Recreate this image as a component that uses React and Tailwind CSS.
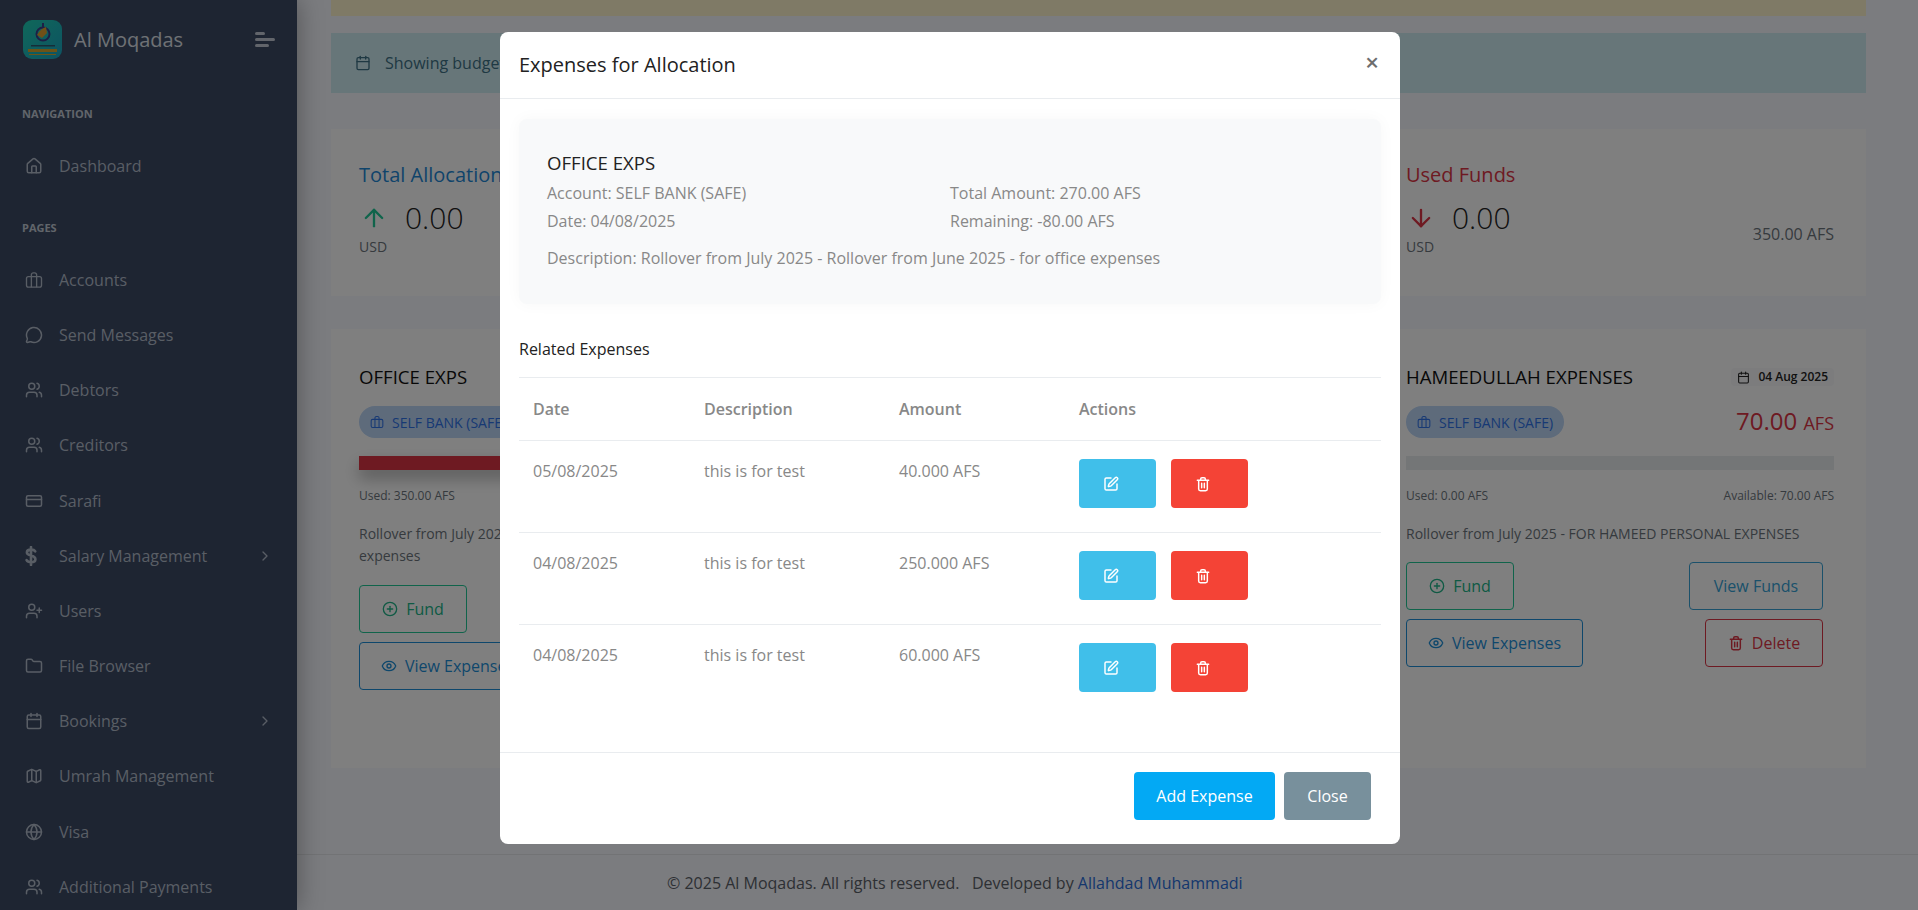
import { House, MessageCircle, Users, CreditCard, ChevronRight, UserPlus, Folder, Calendar, Map, Globe, PlusCircle, Eye, ArrowUp, ArrowDown, SquarePen } from 'lucide-react';

const font = { fontFamily: '"Open Sans", sans-serif' };

function Suitcase({ size = 18, className = '' }) {
  return (
    <svg width={size} height={size} viewBox="0 0 24 24" fill="none" stroke="currentColor" strokeWidth="1.8" strokeLinejoin="round" className={className}>
      <rect x="2" y="7.5" width="20" height="14" rx="2.5" />
      <path d="M8.5 7.5V21.5M15.5 7.5V21.5M8.5 7.5V5a2.5 2.5 0 0 1 2.5-2.5h2A2.5 2.5 0 0 1 15.5 5v2.5" />
    </svg>
  );
}

function TrashAlt({ size = 16, className = '' }) {
  return (
    <svg width={size} height={size} viewBox="0 0 24 24" fill="none" stroke="currentColor" strokeWidth="2.2" strokeLinecap="round" strokeLinejoin="round" className={className}>
      <path d="M3.5 6.5h17M8.5 6.5V4.5a2 2 0 0 1 2-2h3a2 2 0 0 1 2 2v2M5.5 6.5V19.5a2.5 2.5 0 0 0 2.5 2.5h8a2.5 2.5 0 0 0 2.5-2.5V6.5M10 11v6.5M14 11v6.5" />
    </svg>
  );
}

function DollarBold({ className = '' }) {
  return (
    <svg width="12" height="20" viewBox="0 0 12 20" fill="none" stroke="currentColor" strokeWidth="2.6" strokeLinecap="round" className={className}>
      <path d="M6 1v18M10.2 5.4C9.4 4 8 3.6 6 3.6 3.6 3.6 1.9 4.7 1.9 6.5 1.9 10.6 10.4 8.6 10.4 13.2 10.4 15.2 8.5 16.3 6 16.3 3.9 16.3 2.4 15.7 1.6 14.2" />
    </svg>
  );
}

function Logo() {
  return (
    <svg width="39" height="39" viewBox="0 0 39 39" className="rounded-[9px] shrink-0">
      <defs>
        <linearGradient id="logoBg" x1="0" y1="0" x2="1" y2="1">
          <stop offset="0" stopColor="#1fd0b4" />
          <stop offset="1" stopColor="#1ca6c4" />
        </linearGradient>
      </defs>
      <rect width="39" height="39" fill="url(#logoBg)" />
      <circle cx="20" cy="14" r="6.5" fill="none" stroke="#3a3f8c" strokeWidth="2" />
      <path d="M14 15c3-5 6-7 9-8l1 6-5 5z" fill="#e0a030" />
      <path d="M19 3h2v5h-2z" fill="#3a3f8c" />
      <path d="M8 25h24v1.5H8z" fill="#2c5a70" />
      <path d="M5 29h29v3H5z" fill="#d9a62e" />
      <path d="M6 34h27v1H6z" fill="#d9a62e" />
    </svg>
  );
}

const NAV_ITEMS = [
  { label: 'Accounts', icon: <Suitcase size={18} /> },
  { label: 'Send Messages', icon: <MessageCircle size={18} /> },
  { label: 'Debtors', icon: <Users size={18} /> },
  { label: 'Creditors', icon: <Users size={18} /> },
  { label: 'Sarafi', icon: <CreditCard size={18} /> },
  { label: 'Salary Management', icon: <DollarBold />, arrow: true },
  { label: 'Users', icon: <UserPlus size={18} /> },
  { label: 'File Browser', icon: <Folder size={18} /> },
  { label: 'Bookings', icon: <Calendar size={18} />, arrow: true },
  { label: 'Umrah Management', icon: <Map size={18} /> },
  { label: 'Visa', icon: <Globe size={18} /> },
  { label: 'Additional Payments', icon: <Users size={18} /> },
];

const EXPENSES = [
  { date: '05/08/2025', description: 'this is for test', amount: '40.000 AFS' },
  { date: '04/08/2025', description: 'this is for test', amount: '250.000 AFS' },
  { date: '04/08/2025', description: 'this is for test', amount: '60.000 AFS' },
];

function NavRow({ item }) {
  return (
    <div className="h-[55.2px] flex items-center pl-[25px] pr-[24px] text-[16px] text-[#b3bccb]">
      <span className="w-[34px] shrink-0 flex items-center">{item.icon}</span>
      <span className="flex-1">{item.label}</span>
      {item.arrow && <ChevronRight size={16} />}
    </div>
  );
}

function Sidebar() {
  return (
    <aside className="relative z-10 w-[297px] shrink-0 h-full bg-[#3c4a64] shadow-[0_0_24px_rgba(0,0,0,0.35)] overflow-hidden">
      <div className="h-[79px] flex items-center pl-[23px] pr-[22px]">
        <Logo />
        <span className="ml-[12px] flex-1 text-[20px] text-[#dfe3ea]">Al Moqadas</span>
        <div className="flex flex-col gap-[3px]">
          <div className="w-[10px] h-[3px] rounded-full bg-[#c5cbd6]" />
          <div className="w-[20px] h-[3px] rounded-full bg-[#c5cbd6]" />
          <div className="w-[14px] h-[3px] rounded-full bg-[#c5cbd6]" />
        </div>
      </div>
      <div className="pl-[22px] mt-[27px] text-[11px] leading-[16px] font-bold text-[#c3cad6]">NAVIGATION</div>
      <div className="mt-[16px]">
        <NavRow item={{ label: 'Dashboard', icon: <House size={18} /> }} />
      </div>
      <div className="pl-[22px] mt-[27px] text-[11px] leading-[16px] font-bold text-[#c3cad6]">PAGES</div>
      <div className="mt-[16px]">
        {NAV_ITEMS.map((item) => (
          <NavRow key={item.label} item={item} />
        ))}
      </div>
    </aside>
  );
}

function OutlineButton({ className, children }) {
  return (
    <button className={`h-[48px] flex items-center justify-center gap-[8px] rounded-[4px] border text-[16px] ${className}`}>
      {children}
    </button>
  );
}

function BudgetCard({ title, date, amount, used, available, description, width, narrow }) {
  return (
    <div className="w-[428px]">
      <div className="flex items-start justify-between h-[30px] mt-[33px]">
        <div className="text-[18.6px] leading-[30px] text-[#111]">{title}</div>
        <div className="mt-[6px] h-[18px] px-[6px] flex items-center gap-[8px] rounded bg-[#f8f9fa] text-[12px] font-semibold text-[#222]">
          <Calendar size={13} />
          {date}
        </div>
      </div>
      <div className="flex items-center justify-between mt-[14px] h-[32px]">
        <div className="h-[32px] px-[11px] flex items-center gap-[8px] rounded-full bg-[#bcd6f7] text-[14px] text-[#2f73e8]">
          <Suitcase size={14} />
          SELF BANK (SAFE)
        </div>
        <div className="text-[#dc3545] text-[24px] leading-[32px]">
          {amount} <span className="text-[18px]">AFS</span>
        </div>
      </div>
      <div className="mt-[18px] h-[14px] bg-[#e9ecef]">
        <div className="h-full bg-[#dc3545] shadow-[0_8px_16px_rgba(0,0,0,0.3)]" style={{ width }} />
      </div>
      <div className="flex justify-between mt-[18px] text-[12px] leading-[16px] text-[#6c757d]">
        <span>Used: {used} AFS</span>
        <span>Available: {available} AFS</span>
      </div>
      <p className="mt-[19px] text-[14px] leading-[22.4px] text-[#6c757d]">{description}</p>
      <div className={`flex justify-between pr-[11px] ${narrow ? 'mt-[17px]' : 'mt-[17px]'}`}>
        <OutlineButton className="w-[108px] border-[#20c997] text-[#20b489]">
          <PlusCircle size={16} /> Fund
        </OutlineButton>
        <OutlineButton className="w-[134px] border-[#36a2d6] text-[#36a2d6]">View Funds</OutlineButton>
      </div>
      <div className="flex justify-between pr-[11px] mt-[9px]">
        <OutlineButton className="w-[177px] border-[#1d8fd8] text-[#1d8fd8]">
          <Eye size={16} /> View Expenses
        </OutlineButton>
        <OutlineButton className="w-[118px] border-[#dc3545] text-[#dc3545]">
          <TrashAlt size={16} /> Delete
        </OutlineButton>
      </div>
    </div>
  );
}

function StatColumn({ title, titleColor, icon }) {
  return (
    <div>
      <div className={`text-[20px] leading-[30px] ${titleColor}`}>{title}</div>
      <div className="flex items-center mt-[8px] h-[40px]">
        <span className="w-[46px] flex justify-center pr-[17px]">{icon}</span>
        <span className="text-[30px] leading-[40px] font-light text-[#222]">0.00</span>
      </div>
      <div className="text-[14px] leading-[18px] text-[#6c757d]">USD</div>
    </div>
  );
}

function Content() {
  return (
    <main className="flex-1 min-w-0 h-full bg-[#f6f8fe] flex flex-col">
      <div className="flex-1 pl-[34px] pr-[52px]">
        <div className="h-[16px] bg-[#fff4cc]" />
        <div className="mt-[17px] h-[60px] bg-[#ceecf3] flex items-center pl-[24px] text-[16px] text-[#3f7286]">
          <Calendar size={16} className="mr-[14px]" />
          Showing budget allocations for August 2025
        </div>
        <div className="mt-[36px] h-[167px] bg-white flex justify-between pl-[28px] pr-[32px] pt-[31px]">
          <StatColumn title="Total Allocations" titleColor="text-[#1e88d6]" icon={<ArrowUp size={28} strokeWidth={2} className="text-[#20c997]" />} />
          <div className="w-[428px] flex justify-between">
            <StatColumn title="Used Funds" titleColor="text-[#dc3545]" icon={<ArrowDown size={28} strokeWidth={2} className="text-[#dc3545]" />} />
            <div className="text-[16px] text-[#6c757d] self-start mt-[62px]">350.00 AFS</div>
          </div>
        </div>
        <div className="mt-[33px] h-[439px] bg-white flex justify-between pl-[28px] pr-[32px]">
          <BudgetCard
            title="OFFICE EXPS"
            date="04 Aug 2025"
            amount="270.00"
            used="350.00"
            available="-80.00"
            width="100%"
            description="Rollover from July 2025 - Rollover from June 2025 - for office expenses"
          />
          <BudgetCard
            title="HAMEEDULLAH EXPENSES"
            date="04 Aug 2025"
            amount="70.00"
            used="0.00"
            available="70.00"
            width="0%"
            narrow
            description="Rollover from July 2025 - FOR HAMEED PERSONAL EXPENSES"
          />
        </div>
      </div>
      <footer className="h-[56px] border-t border-[#e4e6ea] pl-[370px] flex items-center text-[16px] text-[#5b6068] shrink-0">
        <span>© 2025 Al Moqadas. All rights reserved.&nbsp;&nbsp; Developed by <span className="text-[#2a6fdb]">Allahdad Muhammadi</span></span>
      </footer>
    </main>
  );
}

function ExpenseRow({ expense, last }) {
  return (
    <tr className={last ? '' : 'border-b border-[#e9ecef]'}>
      <td className="pl-[14px] pt-[18px] align-top text-[16px] leading-[24px] text-[#888]">{expense.date}</td>
      <td className="pl-[14px] pt-[18px] align-top text-[16px] leading-[24px] text-[#888]">{expense.description}</td>
      <td className="pl-[14px] pt-[18px] align-top text-[16px] leading-[24px] text-[#888]">{expense.amount}</td>
      <td className="pl-[14px] pt-[18px] pb-[24px] align-top">
        <div className="flex gap-[15px]">
          <button className="w-[77px] h-[49px] rounded-[4px] bg-[#40bfea] flex items-center justify-start pl-[24px] text-white">
            <SquarePen size={16} strokeWidth={2.2} />
          </button>
          <button className="w-[77px] h-[49px] rounded-[4px] bg-[#f44336] flex items-center justify-start pl-[24px] text-white">
            <TrashAlt size={16} />
          </button>
        </div>
      </td>
    </tr>
  );
}

function ExpensesModal() {
  return (
    <div className="absolute inset-0 z-20 bg-black/50 flex justify-center pr-[18px] pt-[32px]">
      <div className="w-[900px] h-[812px] bg-white rounded-[8px] flex flex-col overflow-hidden">
        <div className="h-[67px] shrink-0 border-b border-[#e9ecef] flex items-center justify-between pl-[19px] pr-[21px]">
          <h2 className="text-[20px] text-[#222]">Expenses for Allocation</h2>
          <span className="text-[24px] font-semibold leading-none text-[#6e6e6e] -mt-[6px]">×</span>
        </div>
        <div className="flex-1 px-[19px] pt-[20px]">
          <div className="h-[185px] rounded-[8px] bg-[#f8f9fa] shadow-[0_0_16px_rgba(0,0,0,0.035)] px-[28px] pt-[29px]">
            <div className="text-[18.6px] leading-[30px] text-[#222]">OFFICE EXPS</div>
            <div className="grid grid-cols-2 mt-[1px] text-[16px] leading-[28px] text-[#888]">
              <span>Account: SELF BANK (SAFE)</span>
              <span className="pl-[-1px]">Total Amount: 270.00 AFS</span>
              <span>Date: 04/08/2025</span>
              <span>Remaining: -80.00 AFS</span>
            </div>
            <p className="mt-[9px] text-[16px] leading-[28px] text-[#888]">
              Description: Rollover from July 2025 - Rollover from June 2025 - for office expenses
            </p>
          </div>
          <div className="mt-[33px] text-[16px] leading-[24px] text-[#222]">Related Expenses</div>
          <table className="mt-[16px] w-full table-fixed border-t border-[#e9ecef]">
            <colgroup>
              <col className="w-[171px]" />
              <col className="w-[195px]" />
              <col className="w-[180px]" />
              <col />
            </colgroup>
            <thead>
              <tr className="h-[63px] border-b border-[#e9ecef] text-left text-[16px] text-[#888]">
                <th className="pl-[14px] font-semibold">Date</th>
                <th className="pl-[14px] font-semibold">Description</th>
                <th className="pl-[14px] font-semibold">Amount</th>
                <th className="pl-[14px] font-semibold">Actions</th>
              </tr>
            </thead>
            <tbody>
              {EXPENSES.map((expense, i) => (
                <ExpenseRow key={i} expense={expense} last={i === EXPENSES.length - 1} />
              ))}
            </tbody>
          </table>
        </div>
        <div className="h-[92px] shrink-0 border-t border-[#e9ecef] flex items-start justify-end gap-[9px] pt-[19px] pr-[29px]">
          <button className="w-[141px] h-[48px] rounded-[4px] bg-[#03a9f4] text-white text-[16px] font-medium">Add Expense</button>
          <button className="w-[87px] h-[48px] rounded-[4px] bg-[#78909c] text-white text-[16px] font-medium">Close</button>
        </div>
      </div>
    </div>
  );
}

export default function App() {
  return (
    <div className="relative flex h-screen w-screen overflow-hidden" style={font}>
      <Sidebar />
      <Content />
      <ExpensesModal />
    </div>
  );
}
